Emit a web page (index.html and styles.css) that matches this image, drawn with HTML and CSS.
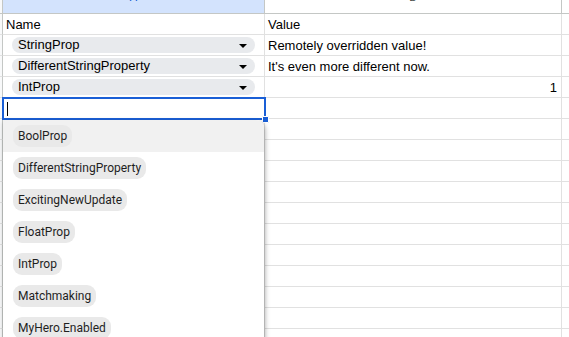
FILE: index.html
```html
<!DOCTYPE html>
<html lang="en">
<head>
  <meta charset="UTF-8">
  <meta name="viewport" content="width=device-width, initial-scale=1">
  <title>Remote Config Sheet</title>
  <link rel="stylesheet" href="styles.css">
</head>
<body>
<div class="sheet">
  <div class="grid">
    <div class="corner"></div>
    <div class="colhdr active"><span>A</span></div>
    <div class="colhdr"><span>B</span></div>
    <div class="colhdr rest"></div>

    <div class="rowhdr"></div>
    <div class="cell">Name</div>
    <div class="cell">Value</div>
    <div class="cell rest"></div>

    <div class="rowhdr"></div>
    <div class="cell"><div class="chip">StringProp<i class="arrow"></i></div></div>
    <div class="cell">Remotely overridden value!</div>
    <div class="cell rest"></div>

    <div class="rowhdr"></div>
    <div class="cell"><div class="chip">DifferentStringProperty<i class="arrow"></i></div></div>
    <div class="cell">It's even more different now.</div>
    <div class="cell rest"></div>

    <div class="rowhdr"></div>
    <div class="cell"><div class="chip">IntProp<i class="arrow"></i></div></div>
    <div class="cell num">1</div>
    <div class="cell rest"></div>

    <div class="rowhdr"></div>
    <div class="cell"></div>
    <div class="cell"></div>
    <div class="cell rest"></div>
  </div>

  <div class="grid" id="emptyRows"></div>

  <div class="editor"><span class="caret"></span><i class="handle"></i></div>

  <ul class="dropdown">
    <li class="hover"><span class="opt">BoolProp</span></li>
    <li><span class="opt">DifferentStringProperty</span></li>
    <li><span class="opt">ExcitingNewUpdate</span></li>
    <li><span class="opt">FloatProp</span></li>
    <li><span class="opt">IntProp</span></li>
    <li><span class="opt">Matchmaking</span></li>
    <li><span class="opt">MyHero.Enabled</span></li>
  </ul>
</div>

<script>
  // fill the rest of the sheet with blank rows
  let emptyRows = document.getElementById("emptyRows");
  let html = "";
  for (let i = 0; i < 11; i++) {
    html += '<div class="rowhdr"></div><div class="cell"></div><div class="cell"></div><div class="cell rest"></div>';
  }
  emptyRows.innerHTML = html;
</script>
</body>
</html>
```

FILE: styles.css
```css
body {
  margin: 0;
  font-family: 'Liberation Sans', Arial, sans-serif;
  background: #fff;
  overflow: hidden;
}

.sheet {
  position: relative;
  width: 569px;
  height: 337px;
  overflow: hidden;
}

.grid {
  display: grid;
  grid-template-columns: 3px 262px 297px 1fr;
}

.corner,
.colhdr {
  height: 13px;
  border-bottom: 1px solid #c4c7c5;
  border-right: 1px solid #c4c7c5;
  background: #f8f9fa;
  overflow: hidden;
  box-sizing: content-box;
}

.corner {
  border-right: 1px solid #c4c7c5;
  width: 2px;
}

.colhdr {
  background: #fff;
  text-align: center;
  font-size: 11px;
  color: #444746;
}

.colhdr span {
  display: block;
  line-height: 14px;
  margin-top: -10px;
}

.colhdr.active {
  background: #d3e3fd;
  color: #0b57d0;
}

.colhdr.rest {
  border-right: none;
}

.rowhdr {
  height: 20px;
  border-bottom: 1px solid #e1e1e1;
  border-right: 1px solid #c4c7c5;
  background: #f8f9fa;
}

.cell {
  height: 20px;
  line-height: 21px;
  border-bottom: 1px solid #e1e1e1;
  border-right: 1px solid #e1e1e1;
  font-size: 13px;
  color: #000;
  padding: 0 3px;
  white-space: nowrap;
  overflow: hidden;
}

.cell.rest {
  border-right: none;
}

.cell.num {
  text-align: right;
  padding-right: 4px;
}

.chip {
  display: flex;
  align-items: center;
  justify-content: space-between;
  margin: 2px 0 0 6px;
  width: 243px;
  height: 16px;
  box-sizing: border-box;
  padding: 0 8px 0 6px;
  background: #e8eaed;
  border-radius: 8px;
  line-height: 16px;
}

.arrow {
  width: 0;
  height: 0;
  margin-top: 1px;
  border-left: 4px solid transparent;
  border-right: 4px solid transparent;
  border-top: 4px solid #000;
}

.editor {
  position: absolute;
  left: 2px;
  top: 97px;
  width: 260px;
  height: 19px;
  border: 2px solid #1a5fd6;
  background: #fff;
  box-shadow: inset 0 0 0 1px #fff;
}

.caret {
  position: absolute;
  left: 3px;
  top: 3px;
  width: 1px;
  height: 14px;
  background: #000;
}

.handle {
  position: absolute;
  right: -5px;
  bottom: -5px;
  width: 5px;
  height: 5px;
  background: #1a5fd6;
  border: 1px solid #fff;
  border-radius: 1px;
}

.dropdown {
  position: absolute;
  left: 3px;
  top: 120px;
  width: 261px;
  height: 240px;
  margin: 0;
  padding: 0;
  list-style: none;
  background: #fff;
  border-radius: 0 8px 0 0;
  box-shadow: 1px 2px 5px rgba(0, 0, 0, 0.35);
  font-family: Roboto, 'Liberation Sans', sans-serif;
}

.dropdown li {
  height: 32px;
  display: flex;
  align-items: center;
  padding-left: 10px;
}

.dropdown li.hover {
  background: #f1f1f1;
  border-radius: 0 8px 0 0;
}

.opt {
  display: inline-block;
  height: 22px;
  line-height: 22px;
  padding: 0 5px;
  border-radius: 9px;
  background: #e9e9e9;
  font-size: 12px;
  color: #1f1f1f;
}
```
